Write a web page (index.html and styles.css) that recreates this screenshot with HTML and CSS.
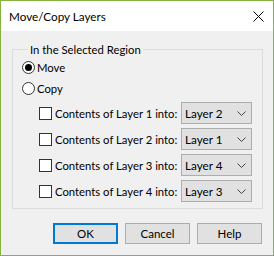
FILE: index.html
```html
<!DOCTYPE html>
<html>
<head>
	<title>Move/Copy Layers</title>
	<meta charset="utf-8" />
	<link rel="stylesheet" href="styles.css">
</head>
<body>
	<div class="window">
		<div class="titlebar">
			<span class="title">Move/Copy Layers</span>
			<svg class="close" width="11" height="11" viewBox="0 0 11 11"><path d="M0.5 0.5 L10.5 10.5 M10.5 0.5 L0.5 10.5" stroke="#000" stroke-width="1" fill="none"/></svg>
		</div>

		<div class="client">
			<fieldset class="group">
				<legend>In the Selected Region</legend>

				<label class="radio-row"><span class="radio checked"></span>Move</label>
				<label class="radio-row"><span class="radio"></span>Copy</label>

				<div class="layer-row">
					<span class="check"></span>
					<span class="layer-label">Contents of Layer 1 into:</span>
					<div class="combo"><span>Layer 2</span><svg width="9" height="5" viewBox="0 0 9 5"><path d="M0.5 0.5 L4.5 4.5 L8.5 0.5" stroke="#444" fill="none"/></svg></div>
				</div>
				<div class="layer-row">
					<span class="check"></span>
					<span class="layer-label">Contents of Layer 2 into:</span>
					<div class="combo"><span>Layer 1</span><svg width="9" height="5" viewBox="0 0 9 5"><path d="M0.5 0.5 L4.5 4.5 L8.5 0.5" stroke="#444" fill="none"/></svg></div>
				</div>
				<div class="layer-row">
					<span class="check"></span>
					<span class="layer-label">Contents of Layer 3 into:</span>
					<div class="combo"><span>Layer 4</span><svg width="9" height="5" viewBox="0 0 9 5"><path d="M0.5 0.5 L4.5 4.5 L8.5 0.5" stroke="#444" fill="none"/></svg></div>
				</div>
				<div class="layer-row">
					<span class="check"></span>
					<span class="layer-label">Contents of Layer 4 into:</span>
					<div class="combo"><span>Layer 3</span><svg width="9" height="5" viewBox="0 0 9 5"><path d="M0.5 0.5 L4.5 4.5 L8.5 0.5" stroke="#444" fill="none"/></svg></div>
				</div>
			</fieldset>

			<div class="buttons">
				<button class="btn default">OK</button>
				<button class="btn">Cancel</button>
				<button class="btn">Help</button>
			</div>
		</div>
	</div>
</body>
</html>
```

FILE: styles.css
```css
body {
	margin: 0;
	font-family: Lato, "Noto Sans", sans-serif;
	font-size: 11.3px;
	color: #000;
}

.window {
	width: 274px;
	height: 256px;
	box-sizing: border-box;
	border: 1px solid #86b340;
	background-color: #f0f0f0;
	display: flex;
	flex-direction: column;
}

.titlebar {
	height: 30px;
	background-color: #fff;
	display: flex;
	align-items: center;
	padding: 0 9px 0 8px;
}

.title {
	flex: 1;
	font-size: 11.7px;
}

.close {
	margin-top: 1px;
}

.client {
	flex: 1;
	display: flex;
	flex-direction: column;
}

.group {
	margin: 11px 10px 0 11px;
	padding: 0 10px 6px 9px;
	border: 1px solid #dcdcdc;
	min-width: 0;
}

.group legend {
	padding: 0 2px;
	margin-left: 6px;
	line-height: 15px;
}

.radio-row {
	display: flex;
	align-items: center;
	height: 21px;
}

.radio {
	width: 11px;
	height: 11px;
	border: 1px solid #333;
	border-radius: 50%;
	background-color: #fff;
	margin-right: 2px;
	display: flex;
	align-items: center;
	justify-content: center;
}

.radio.checked::after {
	content: "";
	width: 7px;
	height: 7px;
	border-radius: 50%;
	background-color: #000;
}

.layer-row {
	display: flex;
	align-items: center;
	height: 22px;
	margin-top: 4px;
	padding-left: 17px;
	white-space: nowrap;
}

.radio-row + .layer-row {
	margin-top: 3px;
}

.check {
	width: 11px;
	height: 11px;
	border: 1px solid #333;
	background-color: #fff;
	margin-right: 3px;
}

.layer-label {
	flex: 1;
}

.combo {
	height: 20px;
	border: 1px solid #adadad;
	background-color: #e1e1e1;
	display: flex;
	align-items: center;
	justify-content: space-between;
	padding: 0 5px 0 3px;
	width: 61px;
	font-size: 11.7px;
}

.buttons {
	display: flex;
	justify-content: flex-end;
	gap: 7px;
	margin-top: 14px;
	padding-right: 11px;
}

.btn {
	width: 65px;
	height: 21px;
	border: 1px solid #adadad;
	background-color: #e1e1e1;
	font-family: Lato, "Noto Sans", sans-serif;
	font-size: 11.5px;
	padding: 0;
	color: #000;
}

.btn.default {
	border: 2px solid #0078d7;
}
```
